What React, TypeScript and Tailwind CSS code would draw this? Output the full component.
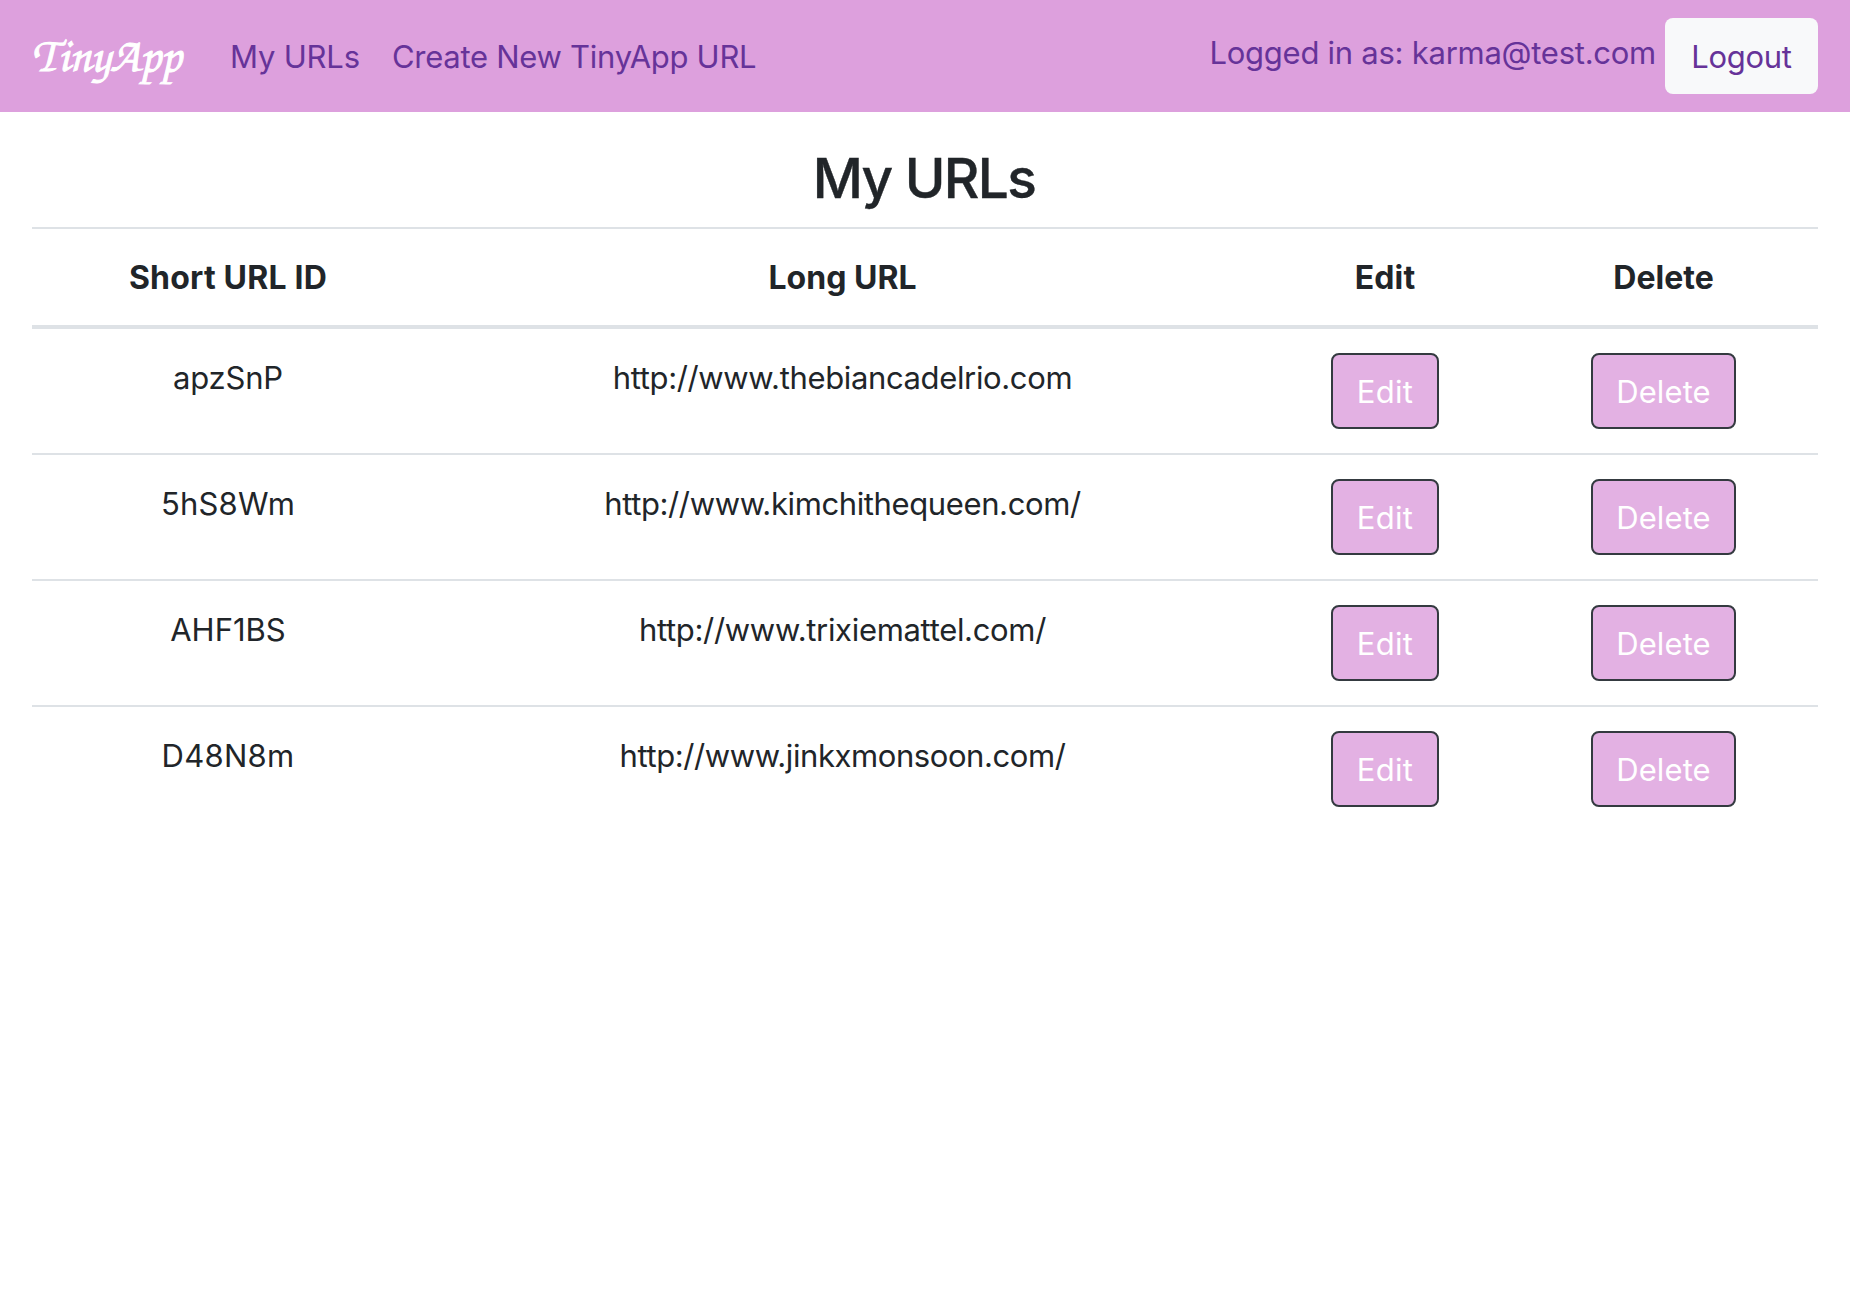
const rows = [
  {
    id: "apzSnP",
    idTracking: "tracking-[-0.2px]",
    url: "http://www.thebiancadelrio.com",
    urlTracking: "tracking-[-0.36px]",
  },
  {
    id: "5hS8Wm",
    idTracking: "tracking-[0.2px]",
    url: "http://www.kimchithequeen.com/",
    urlTracking: "tracking-[-0.38px]",
  },
  {
    id: "AHF1BS",
    idTracking: "tracking-normal",
    url: "http://www.trixiemattel.com/",
    urlTracking: "tracking-[-0.32px]",
  },
  {
    id: "D48N8m",
    idTracking: "tracking-[0.3px]",
    url: "http://www.jinkxmonsoon.com/",
    urlTracking: "tracking-[-0.42px]",
  },
];

const actionButton =
  "mx-auto block h-[76px] rounded-lg border-2 border-[#343a40] bg-[#e3b1e3] pt-0.5 text-white";

function Navbar() {
  return (
    <header className="flex h-28 items-center justify-between bg-[#dda0dd] px-8 text-[#663399]">
      <div className="flex items-center">
        <a
          href="#"
          className="w-[198px] whitespace-nowrap pb-1 font-['TeX_Gyre_Chorus','Liberation_Serif',serif] text-[48px] leading-[60px] tracking-[-0.3px] text-white [-webkit-text-stroke:0.9px_white]"
        >
          <span className="tracking-[2px]">T</span>inyApp
        </a>
        <nav className="flex gap-8 pt-0.5 leading-12">
          <a href="#" className="w-[130px] whitespace-nowrap tracking-[-0.2px]">
            My URLs
          </a>
          <a href="#" className="whitespace-nowrap tracking-[-0.28px]">
            Create New TinyApp URL
          </a>
        </nav>
      </div>
      <div className="flex items-center">
        <span className="mr-[9px] pb-1.5 leading-12 tracking-[-0.26px]">
          Logged in as: karma@test.com
        </span>
        <button className="h-[76px] w-[153px] rounded-lg bg-[#f8f9fa] pt-0.5 tracking-[-0.3px]">
          Logout
        </button>
      </div>
    </header>
  );
}

export default function App() {
  return (
    <div className="min-h-screen bg-white font-['Inter',sans-serif] text-[31px] text-[#212529]">
      <Navbar />
      <main className="px-8">
        <h1 className="h-[115px] pt-8 pr-0.5 text-center text-[55px] leading-[68px] font-medium tracking-[-1.6px] [-webkit-text-stroke:0.4px_#212529]">
          My URLs
        </h1>
        <table className="w-full table-fixed border-separate border-spacing-0 text-center leading-12">
          <colgroup>
            <col className="w-[392px]" />
            <col className="w-[837px]" />
            <col className="w-[248px]" />
            <col className="w-[309px]" />
          </colgroup>
          <thead>
            <tr className="*:border-t-2 *:border-b-4 *:border-[#dee2e6] *:pt-[25px] *:pb-[23px] *:text-[32px] *:font-bold">
              <th className="tracking-[0.2px]">Short URL ID</th>
              <th className="tracking-normal">Long URL</th>
              <th className="tracking-[0.1px]">Edit</th>
              <th className="tracking-normal">Delete</th>
            </tr>
          </thead>
          <tbody>
            {rows.map((row) => (
              <tr
                key={row.id}
                className="*:border-t-2 *:border-[#dee2e6] *:py-6 *:align-top first:*:border-t-0"
              >
                <td className={row.idTracking}>
                  <p className="pt-px">{row.id}</p>
                </td>
                <td className={row.urlTracking}>
                  <p className="pt-px">{row.url}</p>
                </td>
                <td>
                  <button className={`${actionButton} w-[108px] tracking-[0.3px]`}>Edit</button>
                </td>
                <td>
                  <button className={`${actionButton} w-[145px] tracking-[0.1px]`}>Delete</button>
                </td>
              </tr>
            ))}
          </tbody>
        </table>
      </main>
    </div>
  );
}
